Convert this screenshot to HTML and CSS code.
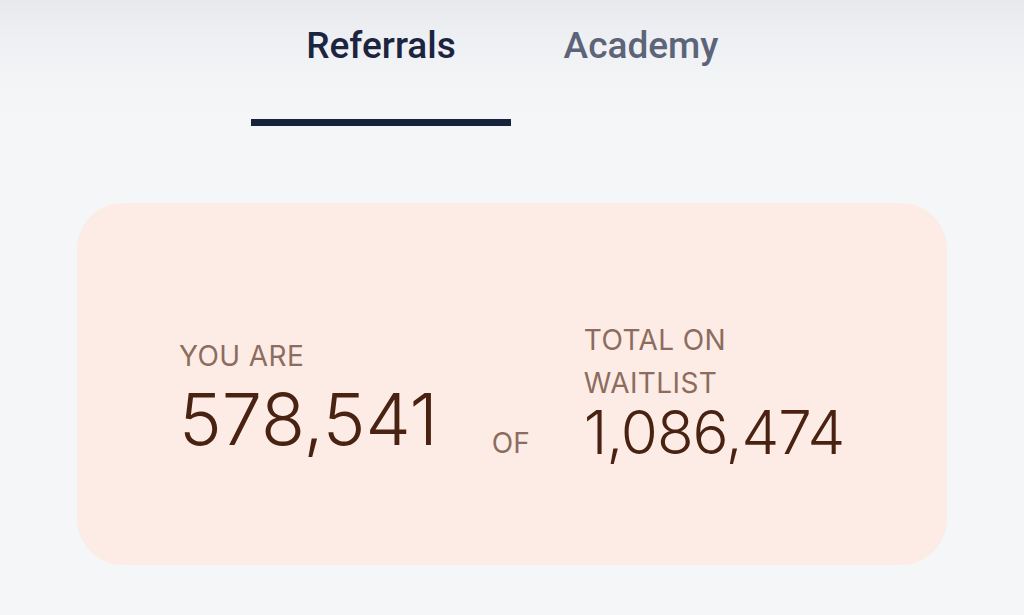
FILE: index.html
```html
<!DOCTYPE html>
<html lang="en">
<head>
<meta charset="utf-8">
<title>Referrals</title>
<link rel="stylesheet" href="styles.css">
</head>
<body>
<header class="top">
  <nav class="tabs">
    <div class="tab tab-active">Referrals</div>
    <div class="tab">Academy</div>
  </nav>
</header>
<main>
  <section class="card">
    <div class="col col-left">
      <div class="label">YOU ARE</div>
      <div class="num num-big">578,541</div>
    </div>
    <div class="of">OF</div>
    <div class="col col-right">
      <div class="label label-wrap">TOTAL ON<br>WAITLIST</div>
      <div class="num num-small">1,086,474</div>
    </div>
  </section>
</main>
</body>
</html>
```
FILE: styles.css
```css
html, body {
  margin: 0;
  padding: 0;
}
body {
  width: 1024px;
  height: 615px;
  overflow: hidden;
  background: #f5f6f8;
  font-family: Inter, "Noto Sans", sans-serif;
}
.top {
  height: 126px;
  background: linear-gradient(to bottom, #e8e9ed 0px, #eff0f3 40px, #f4f5f7 90px, #f5f6f8 126px);
}
.tabs {
  display: flex;
  padding-left: 251px;
}
.tab {
  width: 260px;
  box-sizing: border-box;
  height: 126px;
  padding-top: 25px;
  text-align: center;
  font-family: Roboto, "Noto Sans", sans-serif;
  font-weight: 500;
  font-size: 37px;
  line-height: 42px;
  color: #5c6479;
}
.tab-active {
  color: #1b2540;
  border-bottom: 7px solid #17223c;
}
.card {
  margin: 77px 0 0 77px;
  width: 870px;
  height: 362px;
  box-sizing: border-box;
  border-radius: 46px;
  background: #fdece5;
  display: flex;
  align-items: flex-start;
  padding: 116px 0 0 102px;
}
.label {
  font-size: 28px;
  line-height: 30px;
  letter-spacing: 0.4px;
  color: #8d6c60;
  font-weight: 400;
}
.label-wrap {
  line-height: 43px;
}
.col-left {
  margin-top: 22px;
}
.num {
  font-weight: 300;
  color: #4a2212;
}
.num-big {
  margin-top: 21px;
  font-size: 72px;
  line-height: 54px;
}
.num-small {
  margin-top: 5px;
  font-size: 60px;
  line-height: 44px;
  letter-spacing: -1px;
}
.of {
  margin: 109px 0 0 54px;
  font-size: 28px;
  line-height: 30px;
  color: #8d6c60;
}
.col-right {
  margin-left: 54px;
}
```
